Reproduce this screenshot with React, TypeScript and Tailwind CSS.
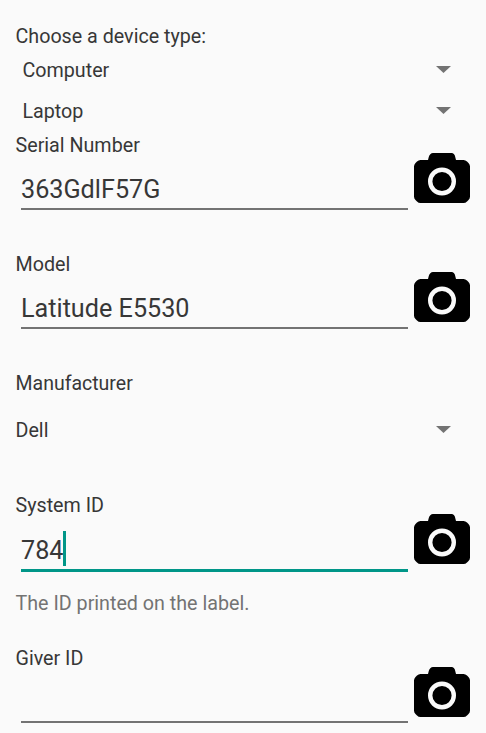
import React from "react";

function Camera() {
  return (
    <svg className="block h-[50px] w-14 shrink-0" viewBox="0 0 56 50" aria-label="Scan with camera">
      <path fill="#000" d="M19 0h18.5C39.5 0 41 2 41.3 4.2L42 7h7.5Q51.5 7 53 8.5L54.5 10Q56 11.5 56 13.5V43.5Q56 45.5 54.5 47L53 48.5Q51.5 50 49.5 50h-43Q4.500 50 3 48.5L1.500 47Q0 45.500 0 43.500V13.500Q0 11.500 1.500 10L3 8.500Q4.500 7 6.500 7H14l.7-2.8C15.300 1.700 17 0 19 0z" />
      <circle cx="28" cy="28.5" r="11.8" fill="none" stroke="#fafafa" strokeWidth="4.4" />
    </svg>
  );
}

function Spinner({ value, className }: { value: string; className: string }) {
  return (
    <div className={`flex h-6 items-start justify-between pr-[35px] text-[19.7px] leading-[26px] ${className}`}>
      <span>{value}</span>
      <svg className="mt-2 h-[7px] w-[15px]" viewBox="0 0 15 7"><path d="M0 0h15L7.500 7z" fill="#737373" /></svg>
    </div>
  );
}

function Field({ label, value, active = false, low = false }: { label: string; value: string; active?: boolean; low?: boolean }) {
  return (
    <div className="flex h-[80px] pl-[15.5px]">
      <div className="w-[398.5px]">
        <div className="h-6 text-[19.7px] leading-[26px]">{label}</div>
        <div className={`ml-[5.5px] mt-[5px] flex w-[387px] items-start text-[25.2px] leading-[30px] ${active ? "h-[50px] border-b-[3px] border-[#009688]" : "h-[48px] border-b-2 border-[#737373]"}`}>
          <span className={active ? "pt-3.5" : "pt-[13px]"}>{value}</span>
          {active && <span className="mt-[9px] h-[35px] w-[3px] bg-[#009688]" />}
        </div>
      </div>
      <div className={low ? "pt-[21px]" : "pt-5"}><Camera /></div>
    </div>
  );
}

export default function App() {
  return (
    <main className="h-[733px] w-[486px] overflow-hidden bg-[#fafafa] pt-6 font-['Roboto',sans-serif] text-[#373737]">
      <div className="h-6 pl-[15.5px] text-[19.7px] leading-[26px]">Choose a device type:</div>
      <Spinner value="Computer" className="mt-[10px] pl-[22.5px]" />
      <Spinner value="Laptop" className="mt-[17px] pl-[22.5px]" />
      <div className="mt-[10px]"><Field label="Serial Number" value="363GdlF57G" /></div>
      <div className="mt-[39px]"><Field label="Model" value="Latitude E5530" /></div>
      <div className="mt-[39px] h-6 pl-[15.5px] text-[19.5px] leading-[26px]">Manufacturer</div>
      <Spinner value="Dell" className="mt-[23px] pl-[15.5px]" />
      <div className="mt-[51px]"><Field label="System ID" value="784" active low /></div>
      <div className="mt-[18px] h-6 pl-[15.5px] text-[19.7px] leading-[26px] text-[#737373]">The ID printed on the label.</div>
      <div className="mt-[31px]"><Field label="Giver ID" value="" low /></div>
    </main>
  );
}
